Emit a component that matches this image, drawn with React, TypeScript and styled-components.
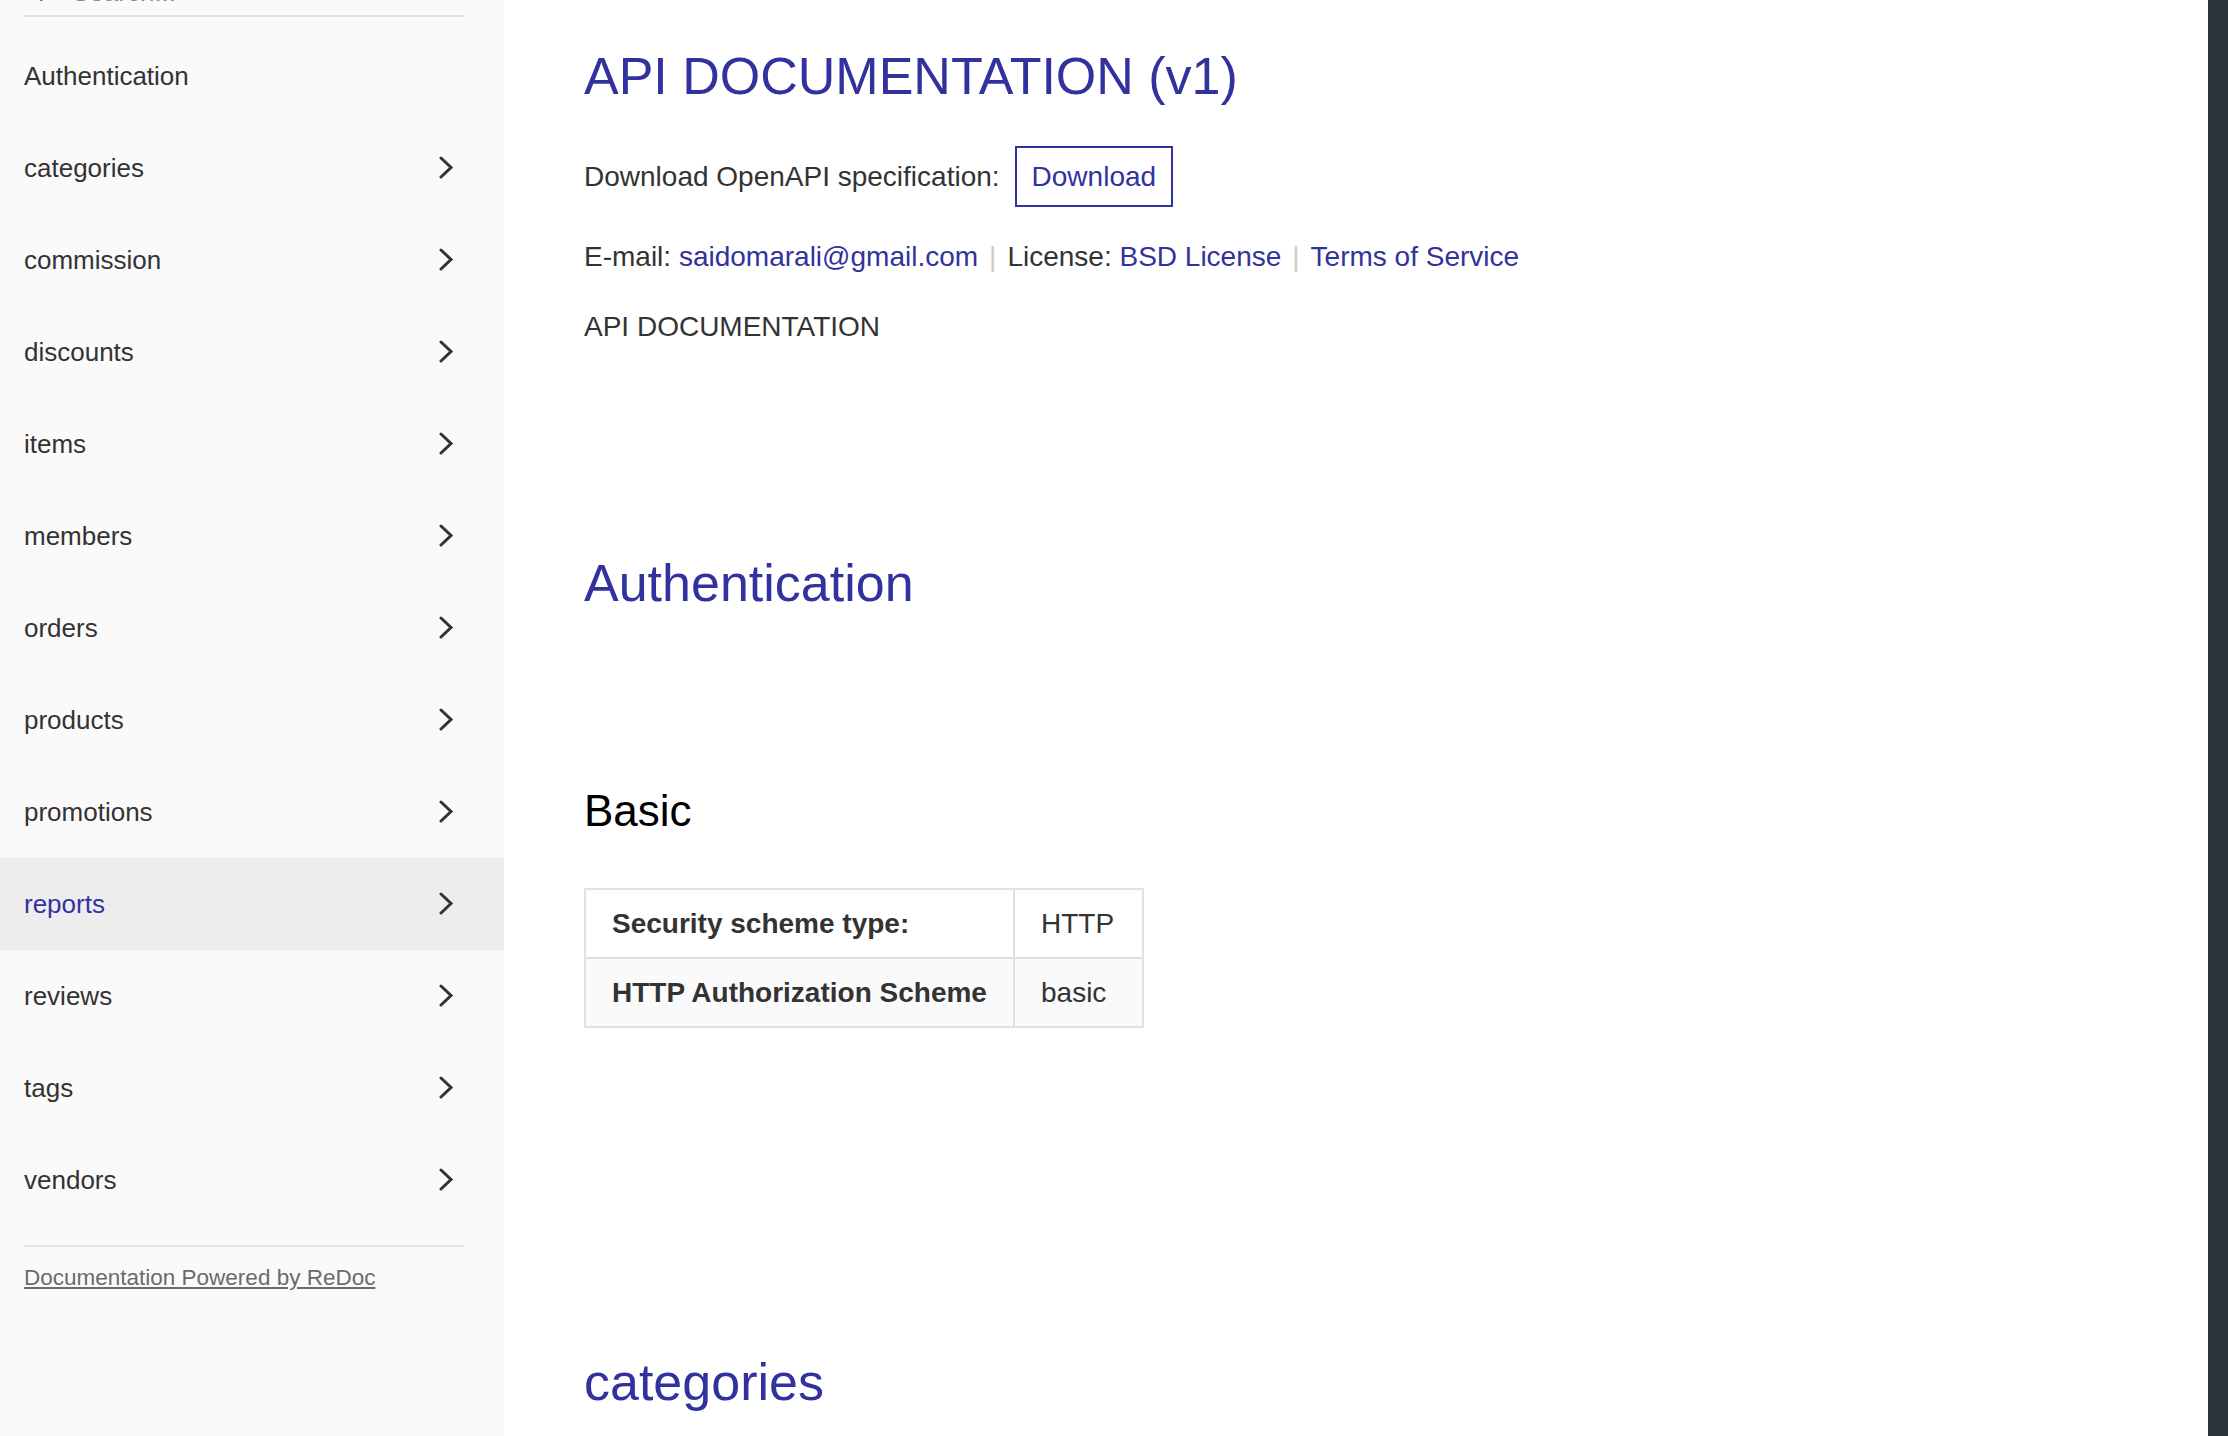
import React from "react";
import styled, { createGlobalStyle } from "styled-components";

const GlobalStyle = createGlobalStyle`
  html, body {
    margin: 0;
    padding: 0;
    background: #ffffff;
  }
  body {
    font-family: "Liberation Sans", Arial, Helvetica, sans-serif;
    color: #333333;
    -webkit-font-smoothing: antialiased;
  }
  * { box-sizing: border-box; }
`;

const Page = styled.div`
  display: flex;
  width: 2228px;
  height: 1436px;
  overflow: hidden;
`;

const Sidebar = styled.aside`
  width: 504px;
  flex-shrink: 0;
  height: 100%;
  background: #fafafa;
  display: flex;
  flex-direction: column;
  overflow: hidden;
`;

const SearchBox = styled.div`
  margin: -31px 40px 0 24px;
  height: 48px;
  display: flex;
  align-items: center;
  gap: 14px;
  padding-left: 14px;
  border-bottom: 2px solid #e1e1e1;
  font-size: 26px;
  color: #8a8a8a;
`;

const MenuList = styled.ul`
  list-style: none;
  margin: 0;
  padding: 13px 0 0 0;
`;

const MenuItem = styled.li<{ $active?: boolean }>`
  height: 92px;
  display: flex;
  align-items: center;
  justify-content: space-between;
  padding: 0 49px 0 24px;
  font-size: 26px;
  color: ${(p) => (p.$active ? "#32329f" : "#333333")};
  background: ${(p) => (p.$active ? "#ededed" : "transparent")};
`;

const SidebarFooter = styled.div`
  margin: 19px 40px 0 24px;
  padding-top: 16px;
  border-top: 2px solid #e6e6e6;
`;

const FooterLink = styled.a`
  font-size: 22.5px;
  line-height: 30px;
  color: #6b6b6b;
  text-decoration: underline;
`;

const Main = styled.main`
  flex: 1;
  background: #ffffff;
  padding: 46px 0 0 80px;
  overflow: hidden;
`;

const RightPanel = styled.div`
  width: 20px;
  flex-shrink: 0;
  background: #2b343b;
`;

const Title = styled.h1`
  margin: 0;
  font-size: 52px;
  line-height: 60px;
  font-weight: 400;
  color: #32329f;
`;

const DownloadRow = styled.div`
  margin-top: 40px;
  height: 61px;
  display: flex;
  align-items: center;
  font-size: 28px;
  color: #333333;
`;

const DownloadButton = styled.a`
  margin-left: 15px;
  height: 61px;
  padding: 0 15px;
  display: inline-flex;
  align-items: center;
  border: 2px solid #32329f;
  color: #32329f;
  font-size: 28px;
  text-decoration: none;
`;

const InfoLine = styled.p`
  margin: 29px 0 0 0;
  font-size: 28px;
  line-height: 42px;
  color: #333333;
`;

const InfoLink = styled.a`
  color: #32329f;
  text-decoration: none;
`;

const Sep = styled.span`
  margin: 0 11px;
  color: #cccccc;
`;

const Description = styled.p`
  margin: 28px 0 0 0;
  font-size: 28px;
  line-height: 42px;
  color: #333333;
`;

const SectionTitle = styled.h1<{ $gap: number }>`
  margin: ${(p) => p.$gap}px 0 0 0;
  font-size: 52px;
  line-height: 60px;
  font-weight: 400;
  color: #32329f;
`;

const SubTitle = styled.h2`
  margin: 172px 0 0 0;
  font-size: 44px;
  line-height: 52px;
  font-weight: 400;
  color: #000000;
`;

const SchemeTable = styled.table`
  margin-top: 51px;
  border-collapse: collapse;
  font-size: 28px;
  color: #333333;
`;

const Row = styled.tr<{ $alt?: boolean }>`
  background: ${(p) => (p.$alt ? "#fafafa" : "#ffffff")};
`;

const HeadCell = styled.th`
  width: 375px;
  height: 67px;
  padding: 0 26px;
  border: 2px solid #e1e1e1;
  text-align: left;
  font-weight: 700;
  box-sizing: content-box;
`;

const ValueCell = styled.td`
  width: 75px;
  height: 67px;
  padding: 0 26px;
  border: 2px solid #e1e1e1;
  text-align: left;
  box-sizing: content-box;
`;

const Chevron = () => (
  <svg width="16" height="24" viewBox="0 0 16 24" fill="none">
    <polyline
      points="2,2 12,11.5 2,21"
      stroke="#333333"
      strokeWidth="3"
      strokeLinecap="round"
      strokeLinejoin="miter"
    />
  </svg>
);

const SearchIcon = () => (
  <svg width="20" height="20" viewBox="0 0 20 20" fill="none">
    <circle cx="12" cy="8" r="6" stroke="#333" strokeWidth="3" />
    <line x1="7.5" y1="12.5" x2="2" y2="18" stroke="#333" strokeWidth="3.5" />
  </svg>
);

const tags = [
  "categories",
  "commission",
  "discounts",
  "items",
  "members",
  "orders",
  "products",
  "promotions",
  "reports",
  "reviews",
  "tags",
  "vendors",
];

export default function App() {
  return (
    <>
      <GlobalStyle />
      <Page>
        <Sidebar>
          <SearchBox>
            <SearchIcon />
            <span>Search...</span>
          </SearchBox>
          <MenuList>
            <MenuItem>Authentication</MenuItem>
            {tags.map((t) => (
              <MenuItem key={t} $active={t === "reports"}>
                <span>{t}</span>
                <Chevron />
              </MenuItem>
            ))}
          </MenuList>
          <SidebarFooter>
            <FooterLink href="#">Documentation Powered by ReDoc</FooterLink>
          </SidebarFooter>
        </Sidebar>
        <Main>
          <Title>API DOCUMENTATION (v1)</Title>
          <DownloadRow>
            <span>Download OpenAPI specification:</span>
            <DownloadButton href="#">Download</DownloadButton>
          </DownloadRow>
          <InfoLine>
            E-mail: <InfoLink href="#">saidomarali@gmail.com</InfoLink>
            <Sep>|</Sep>
            License: <InfoLink href="#">BSD License</InfoLink>
            <Sep>|</Sep>
            <InfoLink href="#">Terms of Service</InfoLink>
          </InfoLine>
          <Description>API DOCUMENTATION</Description>
          <SectionTitle $gap={205}>Authentication</SectionTitle>
          <SubTitle>Basic</SubTitle>
          <SchemeTable>
            <tbody>
              <Row>
                <HeadCell>Security scheme type:</HeadCell>
                <ValueCell>HTTP</ValueCell>
              </Row>
              <Row $alt>
                <HeadCell>HTTP Authorization Scheme</HeadCell>
                <ValueCell>basic</ValueCell>
              </Row>
            </tbody>
          </SchemeTable>
          <SectionTitle $gap={324}>categories</SectionTitle>
        </Main>
        <RightPanel />
      </Page>
    </>
  );
}
